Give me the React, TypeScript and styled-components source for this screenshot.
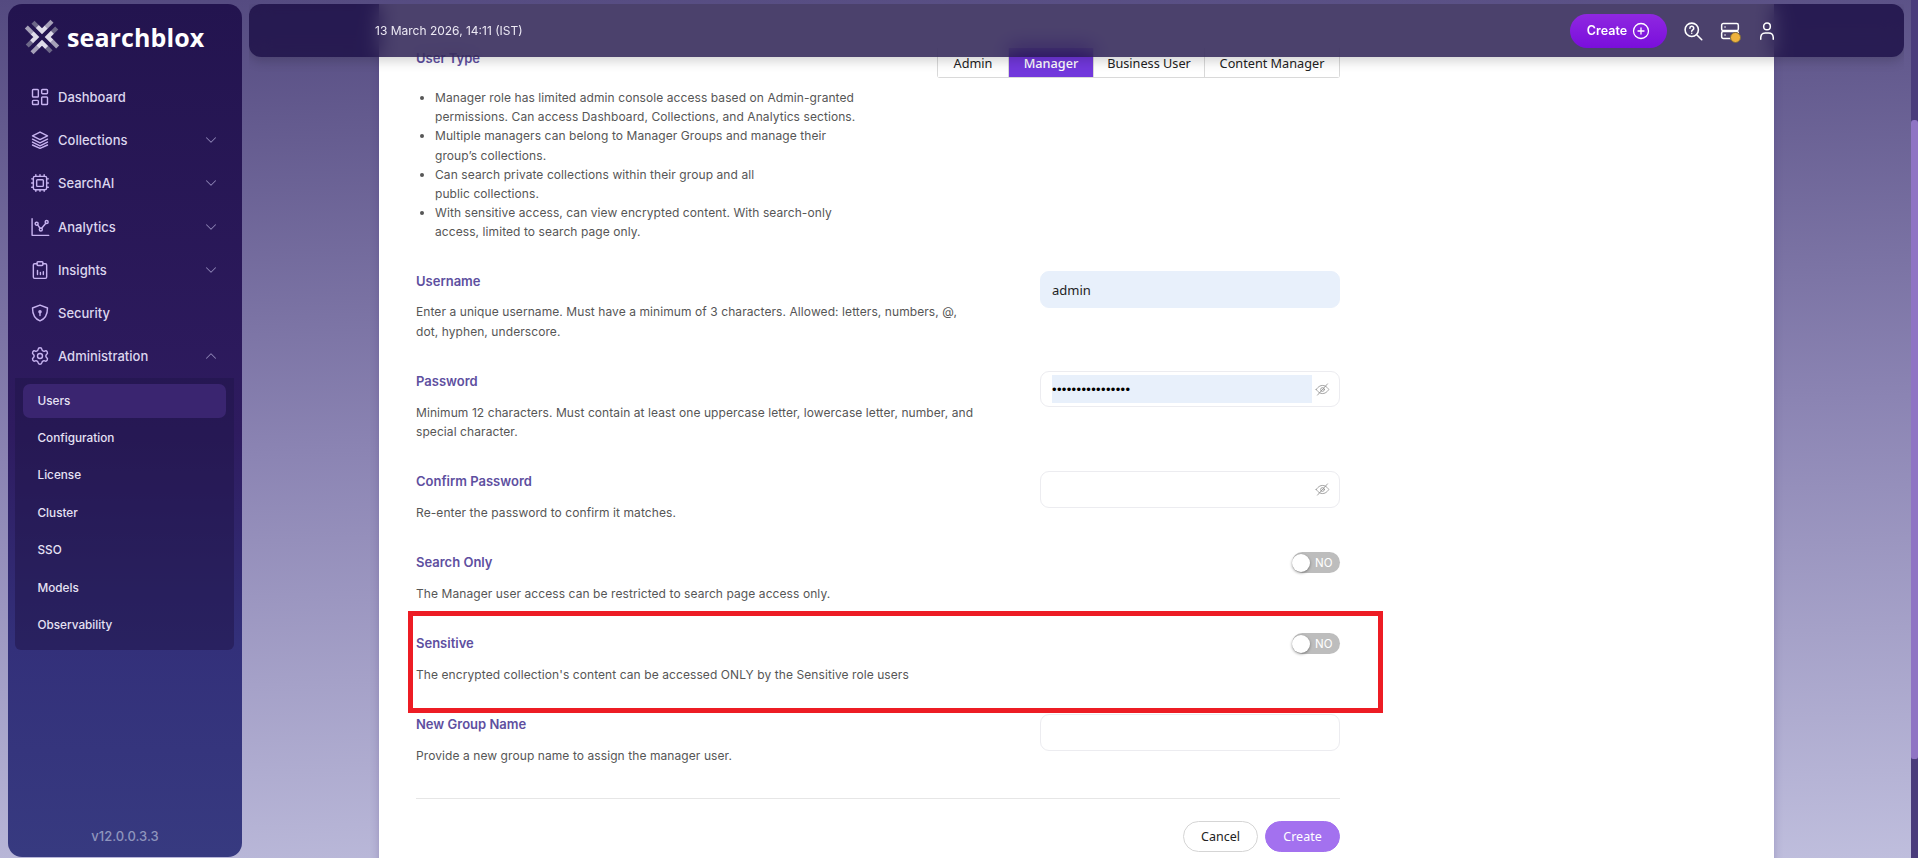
import React from "react";
import styled, { createGlobalStyle } from "styled-components";
import { LayoutDashboard, Cpu, Settings, ChevronDown, ChevronUp, CirclePlus } from "lucide-react";

const Global = createGlobalStyle`
  html, body { margin: 0; padding: 0; height: 100%; overflow: hidden; }
  body { font-family: Inter, "Liberation Sans", sans-serif; }
  * { box-sizing: border-box; }
`;

const Shell = styled.div`
  width: 1918px; height: 858px; display: flex; align-items: stretch;
  padding: 4px 0 0 8px; gap: 7px;
  background: linear-gradient(178deg, #544a80 0%, #8b84b3 50%, #bfbedd 100%);
  overflow: hidden;
`;
const Sidebar = styled.aside`
  width: 234px; height: 853px; flex: none; display: flex; flex-direction: column;
  border-radius: 14px; color: #e8e4f5;
  background: linear-gradient(180deg, #23144f 0%, #2e1b5f 50%, #33307a 75%, #373a80 100%);
`;
const Brand = styled.div`
  height: 71.4px; display: flex; align-items: flex-start; gap: 6px; padding: 14px 0 0 15px;
`;
const BrandName = styled.span`
  font-family: "Open Sans", sans-serif; font-weight: 700; font-size: 25px; line-height: 39px;
  color: #fff; letter-spacing: 0.1px;
`;
const NavItem = styled.div`
  height: 43.2px; display: flex; align-items: center; gap: 9px; padding: 0 22px 0 23px;
  font-size: 13px; font-weight: 500; color: #dcd6ee;
`;
const NavIcon = styled.span`
  width: 18px; height: 18px; flex: none; display: flex; align-items: center; justify-content: center; color: #c7b3f0;
  svg { width: 20px; height: 20px; flex: none; }
`;
const NavLabel = styled.span` flex: 1; `;
const Chevron = styled.span`
  display: flex; color: #8c82b4;
  svg { width: 18px; height: 18px; }
`;
const SubMenu = styled.div`
  margin: 0 8px 0 7px; padding: 6px 8px 8px; display: flex; flex-direction: column; gap: 3.4px;
  background: rgba(32, 22, 74, 0.55); border-radius: 0 0 6px 6px;
`;
const SubItem = styled.div<{ $active?: boolean }>`
  height: 34px; display: flex; align-items: center; padding-left: 14.5px; border-radius: 7px;
  font-size: 11.75px; font-weight: 500; color: #e6e2f4;
  background: ${(p) => (p.$active ? "#3a2570" : "transparent")};
`;
const Version = styled.div`
  margin-top: auto; padding-bottom: 13px; text-align: center;
  font-size: 13px; font-weight: 500; color: #8f95bd;
`;
const Main = styled.main`
  position: relative; width: 1655px; flex: none; overflow: hidden;
`;
const Topbar = styled.header`
  position: absolute; top: 0; left: 0; right: 0; height: 53px; z-index: 3;
  display: flex; align-items: center; padding: 0 127px 0 126px;
  border-radius: 12px; background: rgba(24, 12, 66, 0.78);
  backdrop-filter: blur(10px); box-shadow: 0 4px 12px rgba(0, 0, 0, 0.18);
`;
const DateText = styled.span`
  font-size: 12px; color: #ece9f4; flex: 1;
`;
const CreatePill = styled.button`
  width: 97px; height: 34px; border: 0; border-radius: 17px; margin-right: 16px; padding: 0;
  display: flex; align-items: center; justify-content: center; gap: 5px;
  font: 600 12.5px Inter, sans-serif; color: #fff;
  background: linear-gradient(180deg, #8f28e0 0%, #7a0edc 100%);
  svg { width: 18px; height: 18px; }
`;
const TopIcons = styled.div`
  display: flex; align-items: center; gap: 17px; color: #fff;
`;
const TopIcon = styled.span`
  position: relative; width: 20px; height: 20px; display: flex;
  svg { width: 20px; height: 20px; }
`;
const Badge = styled.span`
  position: absolute; right: -1px; bottom: -2px; width: 11px; height: 11px; border-radius: 50%;
  background: #eeb23e; border: 1px solid #7d6a3c;
`;
const Card = styled.section`
  width: 1395px; margin: -40px auto 0; padding: 84px 434px 40px 37px;
  background: #fff; box-shadow: 0 0 8px rgba(60, 40, 110, 0.25);
`;
const Label = styled.div`
  font-size: 13px; line-height: 20px; font-weight: 600; color: #5e4fa0;
`;
const Desc = styled.div`
  margin-top: 11.4px; max-width: 563px; font-size: 12px; letter-spacing: 0.08px; line-height: 19.2px; color: #565656;
`;
const TypeRow = styled.div`
  display: flex; justify-content: space-between; align-items: flex-start;
`;
const Tabs = styled.div`
  display: flex; height: 30px; border: 1px solid #d9d9d9; border-top: 0; border-radius: 0 0 3px 3px;
`;
const Tab = styled.div<{ $active?: boolean; $w: number }>`
  width: ${(p) => p.$w}px; display: flex; align-items: center; justify-content: center;
  font-family: "Noto Sans", sans-serif; font-size: 12.7px;
  font-weight: ${(p) => (p.$active ? 500 : 400)};
  color: ${(p) => (p.$active ? "#fff" : "#222")};
  background: ${(p) => (p.$active ? "#7238dc" : "#fff")};
  & + & { border-left: 1px solid #d9d9d9; }
`;
const Bullets = styled.ul`
  margin: 10px 0 -1px; padding: 0 0 0 19px; list-style: disc;
  font-size: 12px; letter-spacing: 0.08px; line-height: 19.2px; color: #565656;
`;
const Field = styled.div`
  position: relative; margin-top: 30.4px; display: flex; justify-content: space-between; align-items: flex-start;
`;
const Left = styled.div` width: 600px; `;
const TextBox = styled.div<{ $h: number; $top: number; $filled?: boolean }>`
  width: 300px; height: ${(p) => p.$h}px; margin-top: ${(p) => p.$top}px; flex: none;
  display: flex; align-items: center; padding: 0 9px 0 11px; border-radius: 9px;
  font-family: "Noto Sans", sans-serif; font-size: 13px; color: #222;
  background: ${(p) => (p.$filled ? "#e8f0fb" : "#fff")};
  border: 1px solid ${(p) => (p.$filled ? "#e8f0fb" : "#ececf0")};
`;
const AutoFill = styled.div`
  width: 260px; height: 28px; background: #e8f0fb; display: flex; align-items: center;
  font-size: 13px; letter-spacing: 0.35px; color: #000; line-height: 1; font-family: "Liberation Sans", sans-serif;
`;
const Eye = styled.span`
  margin-left: auto; display: flex; color: #8e8e8e;
  svg { width: 15px; height: 15px; }
`;
const Toggle = styled.div`
  width: 48px; height: 21px; flex: none; display: flex; align-items: center; gap: 5px;
  border-radius: 11px; background: #bdbdbd; color: #fff; font-size: 11.5px; font-weight: 400;
`;
const Knob = styled.span`
  width: 18px; height: 18px; border-radius: 50%; background: #fff; margin-left: 0;
  box-shadow: 0 1px 3px rgba(0, 0, 0, 0.4);
`;
const Highlight = styled.div`
  position: absolute; left: -8px; top: -22px; width: 975px; height: 102px;
  border: 5px solid #ed1c24; pointer-events: none; z-index: 1;
`;
const Divider = styled.hr`
  margin: 33px 0 0; border: 0; border-top: 1px solid #e6e6e6;
`;
const Actions = styled.div`
  margin-top: 22px; display: flex; justify-content: flex-end; gap: 7px;
`;
const ActionBtn = styled.button<{ $primary?: boolean }>`
  width: 75px; height: 31px; border-radius: 16px; padding: 0;
  font-family: "Noto Sans", sans-serif; font-size: 12.5px;
  color: ${(p) => (p.$primary ? "#fff" : "#222")};
  background: ${(p) => (p.$primary ? "#a371ef" : "#fff")};
  border: 1px solid ${(p) => (p.$primary ? "#a371ef" : "#d5d5d5")};
`;
const Rail = styled.div`
  width: 7px; flex: none; margin-top: -4px; height: 858px; padding-top: 120px; background: #4a3c7c;
`;
const Thumb = styled.div`
  height: 639px; background: #8f74c4; border-radius: 3px 3px 2px 2px;
`;

const base = { fill: "none", stroke: "currentColor", strokeWidth: 1.7, strokeLinecap: "round" as const, strokeLinejoin: "round" as const, viewBox: "0 0 24 24" };

const LayersIcon = () => (
  <svg {...base}>
    <path d="M12 2.5 21 7l-9 4.5L3 7z" />
    <path d="m3 11 9 4.5 9-4.500" />
    <path d="m3 14.500 9 4.500 9-4.500" />
    <path d="m3 18 9 4 9-4" />
  </svg>
);
const ChartIcon = () => (
  <svg {...base}>
    <path d="M2.500 2v20h20" />
    <circle cx="8" cy="8" r="1.800" />
    <circle cx="13" cy="15" r="1.800" />
    <circle cx="20" cy="6" r="1.800" />
    <path d="m9.200 9.500 2.800 4M14 13.500l5-6" />
  </svg>
);
const ClipIcon = () => (
  <svg {...base}>
    <path d="M8.500 4.500H5.500a1.500 1.500 0 0 0-1.500 1.500v14.500A1.500 1.500 0 0 0 5.500 22h13a1.500 1.500 0 0 0 1.500-1.500V6a1.500 1.500 0 0 0-1.500-1.500h-3" />
    <rect x="8.500" y="2" width="7" height="4.500" rx="1" />
    <path d="M9 17.500v-5M12.500 17.500v-2.500M16 17.500v-3.500" />
  </svg>
);
const ShieldIcon = () => (
  <svg {...base}>
    <path d="M12 2.500 21 6c0 8-2.500 13-9 15.500C5.500 19 3 14 3 6z" />
    <circle cx="12" cy="10.500" r="1.300" fill="currentColor" />
    <path d="M12 11.500v3.500" />
  </svg>
);
const HelpSearch = () => (
  <svg {...base} strokeWidth={1.9}>
    <circle cx="10.500" cy="10.500" r="8" />
    <path d="m16.500 16.500 6 6" />
    <path d="M8.300 8.600a2.300 2.300 0 1 1 3.400 2c-.8.500-1.200.9-1.200 1.700" />
    <path d="M10.500 14.600v.1" />
  </svg>
);
const ServerIcon = () => (
  <svg {...base} strokeWidth={1.8}>
    <rect x="2" y="3" width="20" height="8.500" rx="2" />
    <rect x="2" y="12.500" width="20" height="8.500" rx="2" />
    <path d="M6 7.200h.1M6 16.800h.1" />
  </svg>
);
const UserIcon = () => (
  <svg {...base} strokeWidth={1.8}>
    <circle cx="12" cy="6.500" r="4" />
    <path d="M4.500 22v-2.500a5.500 5.500 0 0 1 5.500-5h4a5.500 5.500 0 0 1 5.500 5V22" />
  </svg>
);
const EyeOffIcon = () => (
  <svg {...base} strokeWidth={1.3}>
    <path d="M2 12s3.600-6.500 10-6.500S22 12 22 12s-3.600 6.500-10 6.500S2 12 2 12z" />
    <circle cx="12" cy="12" r="3" />
    <path d="M20 3 4 21" />
  </svg>
);
const Mark = () => (
  <svg width="38" height="38" viewBox="0 0 40 40" fill="none" strokeWidth="4.500">
    {[0, 90, 180, 270].map((r) => (
      <g key={r} transform={`rotate(${r} 20 20)`}>
        <path d="M10.500 4.500 15 9" stroke="#6d6888" />
        <path d="M30.500 3.500 24.500 9.500" stroke="#a6a1b8" />
        <path d="M15 9l5 5 4.500-4.500" stroke="#dedbe8" />
      </g>
    ))}
  </svg>
);

const nav = [
  { label: "Dashboard", icon: <LayoutDashboard strokeWidth={1.7} /> },
  { label: "Collections", icon: <LayersIcon />, chev: "down" },
  { label: "SearchAI", icon: <Cpu strokeWidth={1.7} />, chev: "down" },
  { label: "Analytics", icon: <ChartIcon />, chev: "down" },
  { label: "Insights", icon: <ClipIcon />, chev: "down" },
  { label: "Security", icon: <ShieldIcon /> },
  { label: "Administration", icon: <Settings strokeWidth={1.7} />, chev: "up" },
];
const subs = ["Users", "Configuration", "License", "Cluster", "SSO", "Models", "Observability"];
const tabs = [
  { label: "Admin", w: 70 },
  { label: "Manager", w: 85, active: true },
  { label: "Business User", w: 111 },
  { label: "Content Manager", w: 135 },
];

export default function App() {
  return (
    <Shell>
      <Global />
      <Sidebar>
        <Brand>
          <Mark />
          <BrandName>searchblox</BrandName>
        </Brand>
        {nav.map((n) => (
          <NavItem key={n.label}>
            <NavIcon>{n.icon}</NavIcon>
            <NavLabel>{n.label}</NavLabel>
            {n.chev && <Chevron>{n.chev === "up" ? <ChevronUp strokeWidth={1.4} /> : <ChevronDown strokeWidth={1.4} />}</Chevron>}
          </NavItem>
        ))}
        <SubMenu>
          {subs.map((s) => (
            <SubItem key={s} $active={s === "Users"}>{s}</SubItem>
          ))}
        </SubMenu>
        <Version>v12.0.0.3.3</Version>
      </Sidebar>
      <Main>
        <Topbar>
          <DateText>13 March 2026, 14:11 (IST)</DateText>
          <CreatePill>Create <CirclePlus strokeWidth={1.7} /></CreatePill>
          <TopIcons>
            <TopIcon><HelpSearch /></TopIcon>
            <TopIcon><ServerIcon /><Badge /></TopIcon>
            <TopIcon><UserIcon /></TopIcon>
          </TopIcons>
        </Topbar>
        <Card>
          <TypeRow>
            <Label>User Type</Label>
            <Tabs>
              {tabs.map((t) => (
                <Tab key={t.label} $w={t.w} $active={t.active}>{t.label}</Tab>
              ))}
            </Tabs>
          </TypeRow>
          <Bullets>
            <li>Manager role has limited admin console access based on Admin-granted<br />permissions. Can access Dashboard, Collections, and Analytics sections.</li>
            <li>Multiple managers can belong to Manager Groups and manage their<br />group’s collections.</li>
            <li>Can search private collections within their group and all<br />public collections.</li>
            <li>With sensitive access, can view encrypted content. With search-only<br />access, limited to search page only.</li>
          </Bullets>
          <Field>
            <Left>
              <Label>Username</Label>
              <Desc>Enter a unique username. Must have a minimum of 3 characters. Allowed: letters, numbers, @, dot, hyphen, underscore.</Desc>
            </Left>
            <TextBox $h={37} $top={0} $filled>admin</TextBox>
          </Field>
          <Field>
            <Left>
              <Label>Password</Label>
              <Desc>Minimum 12 characters. Must contain at least one uppercase letter, lowercase letter, number, and special character.</Desc>
            </Left>
            <TextBox $h={36} $top={0}>
              <AutoFill>••••••••••••••••</AutoFill>
              <Eye><EyeOffIcon /></Eye>
            </TextBox>
          </Field>
          <Field>
            <Left>
              <Label>Confirm Password</Label>
              <Desc>Re-enter the password to confirm it matches.</Desc>
            </Left>
            <TextBox $h={37} $top={0}>
              <Eye><EyeOffIcon /></Eye>
            </TextBox>
          </Field>
          <Field>
            <Left>
              <Label>Search Only</Label>
              <Desc>The Manager user access can be restricted to search page access only.</Desc>
            </Left>
            <Toggle><Knob />NO</Toggle>
          </Field>
          <Field>
            <Highlight />
            <Left>
              <Label>Sensitive</Label>
              <Desc>The encrypted collection's content can be accessed ONLY by the Sensitive role users</Desc>
            </Left>
            <Toggle><Knob />NO</Toggle>
          </Field>
          <Field>
            <Left>
              <Label>New Group Name</Label>
              <Desc>Provide a new group name to assign the manager user.</Desc>
            </Left>
            <TextBox $h={37} $top={0} />
          </Field>
          <Divider />
          <Actions>
            <ActionBtn>Cancel</ActionBtn>
            <ActionBtn $primary>Create</ActionBtn>
          </Actions>
        </Card>
      </Main>
      <Rail><Thumb /></Rail>
    </Shell>
  );
}
